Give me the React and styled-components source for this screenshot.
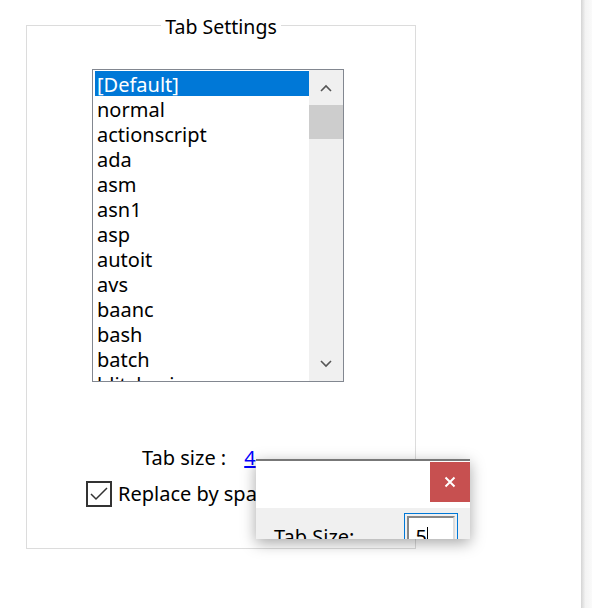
import React from "react";
import styled, { createGlobalStyle } from "styled-components";

const G = createGlobalStyle`
  html,body{margin:0;padding:0;background:#fff;}
  body{font-family:"Noto Sans","Open Sans",sans-serif;color:#000;}
`;
const Page = styled.div`
  width:592px;height:608px;position:relative;overflow:hidden;display:flex;
`;
const Main = styled.div`flex:1;padding:25px 0 0 26px;`;
const Edge = styled.div`
  width:11px;background:linear-gradient(90deg,#d4d4d4,#f3f3f3 40%,#fafafa);
`;
const Group = styled.fieldset`
  width:390px;height:524px;box-sizing:border-box;margin:0;padding:0;
  border:1px solid #dcdcdc;position:relative;
`;
const Legend = styled.div`
  position:absolute;top:-11px;left:0;right:0;text-align:center;font-size:19.5px;line-height:24px;
  span{background:#fff;padding:0 4px;}
`;
const Inner = styled.div`display:flex;flex-direction:column;align-items:flex-start;padding:43px 0 0 65px;`;
const List = styled.div`
  width:252px;height:313px;box-sizing:border-box;border:1px solid #828790;display:flex;overflow:hidden;
`;
const Items = styled.div`flex:1;padding:1px 0 0 2px;overflow:hidden;`;
const Item = styled.div`
  height:25px;line-height:27px;font-size:20px;padding-left:2px;
  background:${p=>p.$sel?"#0078d7":"transparent"};color:${p=>p.$sel?"#fff":"#000"};
`;
const Scroll = styled.div`width:34px;background:#f0f0f0;display:flex;flex-direction:column;align-items:center;padding-top:1px;`;
const Arrow = styled.div`height:34px;width:34px;display:flex;align-items:center;justify-content:center;`;
const Thumb = styled.div`width:34px;height:34px;background:#cdcdcd;`;
const Spacer = styled.div`flex:1;`;
const Row = styled.div`display:flex;align-items:center;font-size:20px;margin-left:${p=>p.$ml}px;margin-top:${p=>p.$mt}px;`;
const Link = styled.a`color:#0000ff;text-decoration:underline;margin-left:18px;`;
const Check = styled.div`width:22px;height:22px;border:2px solid #333;margin-right:6px;display:flex;align-items:center;justify-content:center;`;
const Dialog = styled.div`
  position:absolute;left:256px;top:459px;width:214px;height:78px;border-top:2px solid #777;
  box-shadow:0 4px 14px rgba(0,0,0,.35);background:#f0f0f0;display:flex;flex-direction:column;overflow:hidden;
`;
const Title = styled.div`height:47px;flex:none;background:#fff;display:flex;justify-content:flex-end;padding-top:1px;box-sizing:border-box;`;
const Close = styled.div`width:40px;height:40px;background:#c75050;display:flex;align-items:center;justify-content:center;`;
const Body = styled.div`display:flex;align-items:flex-start;padding:5px 0 0 18px;font-size:20px;`;
const Label = styled.span`margin-top:10px;`;
const Input = styled.div`
  margin-left:50px;width:54px;height:44px;border:1px solid #0078d7;padding:2px;box-sizing:border-box;flex:none;
  div{border:2px solid #888;border-right-color:#ddd;border-bottom-color:#ddd;height:40px;background:#fff;padding-left:6px;line-height:38px;}
  i{display:inline-block;width:1px;height:24px;background:#000;vertical-align:middle;}
`;

const names=["[Default]","normal","actionscript","ada","asm","asn1","asp","autoit","avs","baanc","bash","batch","blitzbasic"];

export default function App(){
  return (<Page><G/>
    <Main>
      <Group>
        <Legend><span>Tab Settings</span></Legend>
        <Inner>
          <List>
            <Items>{names.map((n,i)=><Item key={n} $sel={i===0}>{n}</Item>)}</Items>
            <Scroll>
              <Arrow><svg width="12" height="8" viewBox="0 0 12 8"><path d="M1 7l5-5 5 5" fill="none" stroke="#555" strokeWidth="1.6"/></svg></Arrow>
              <Thumb/>
              <Spacer/>
              <Arrow><svg width="12" height="8" viewBox="0 0 12 8"><path d="M1 1l5 5 5-5" fill="none" stroke="#555" strokeWidth="1.6"/></svg></Arrow>
            </Scroll>
          </List>
          <Row $ml={50} $mt={62}>Tab size :<Link>4</Link></Row>
          <Row $ml={-6} $mt={9}><Check><svg width="20" height="16" viewBox="0 0 20 16"><path d="M2 8l5 5 11-11" fill="none" stroke="#333" strokeWidth="1.5"/></svg></Check>Replace by space</Row>
        </Inner>
      </Group>
    </Main>
    <Edge/>
    <Dialog>
      <Title><Close><svg width="12" height="12" viewBox="0 0 12 12"><path d="M1.5 1.5l9 9M10.5 1.5l-9 9" stroke="#fff" strokeWidth="2"/></svg></Close></Title>
      <Body><Label>Tab Size:</Label><Input><div>5<i/></div></Input></Body>
    </Dialog>
  </Page>);
}
